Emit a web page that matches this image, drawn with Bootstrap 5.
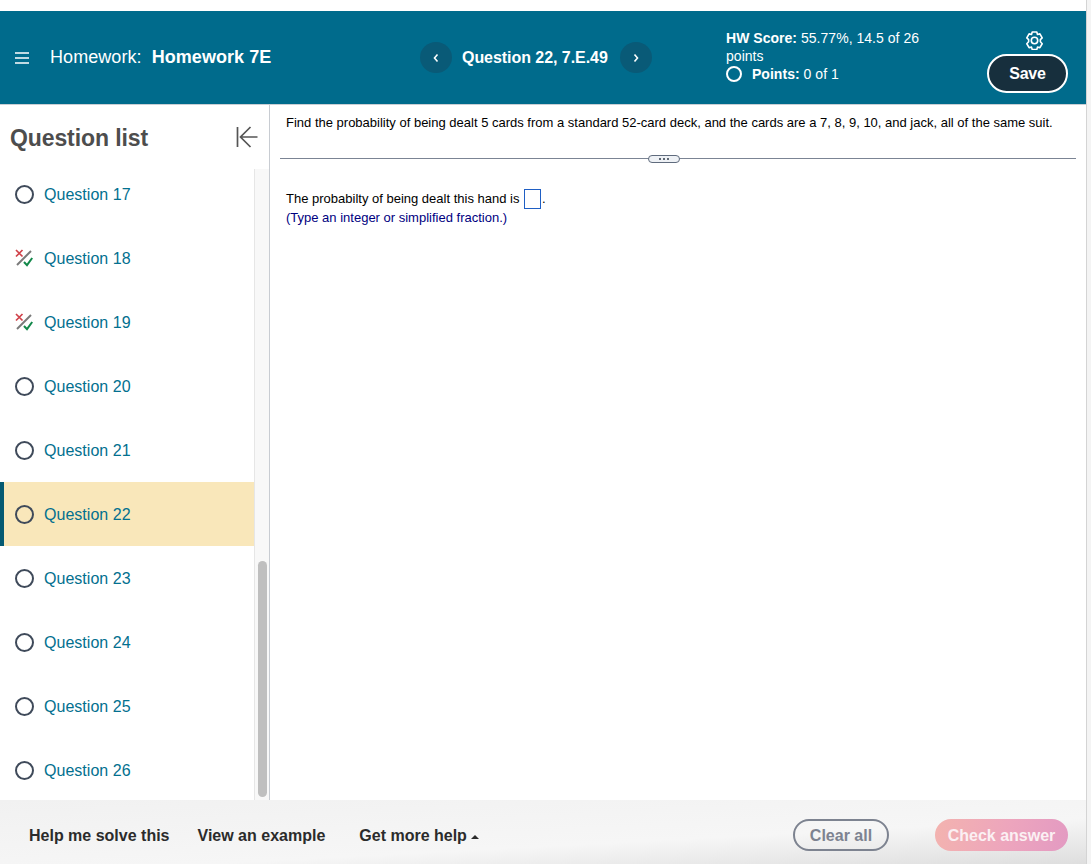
<!DOCTYPE html>
<html lang="en">
<head>
<meta charset="utf-8">
<title>Homework 7E</title>
<link href="https://cdn.jsdelivr.net/npm/bootstrap@5.3.0/dist/css/bootstrap.min.css" rel="stylesheet">
<style>
html,body{height:864px;overflow:hidden}
body{font-family:"Liberation Sans",Arial,sans-serif;background:#fff;color:#000}
.shell{width:1091px;height:864px;padding-top:11px;display:flex;flex-direction:column;position:relative}
.edge{position:absolute;top:0;bottom:0;right:0;width:5px;background:#f4f4f4;border-left:1px solid #d4d4d4}
.topbar{height:94px;width:1086px;background:#006b8c;color:#fff;border-bottom:1px solid #c9ced4;flex:none}
.menu-zone{width:420px;padding-left:15px;gap:21px;font-size:18px;letter-spacing:.06px}
.hamb{width:14px;height:12px;display:block}
.nav-zone{width:306px;font-size:16px;font-weight:700;letter-spacing:-.05px}
.round-nav{width:32px;height:31px;border-radius:50%;background:#095a77;flex:none;padding:0;border:0}
.q-title{width:168px;padding-left:10px;white-space:nowrap}
.score{width:261px;font-size:14px;line-height:18px;padding-bottom:3px;letter-spacing:.03px}
.score-ring{width:16px;height:16px;border:2px solid #fff;border-radius:50%;margin-right:10px;flex:none}
.act-zone{width:86px;padding-top:8px;gap:4px}
.cog{width:19px;height:19px;margin-left:38px;display:block}
.save-pill{width:81px;height:39px;background:#172f3d;border:2px solid #fff;border-radius:20px;color:#fff;font-weight:700;font-size:16px;padding:1px 0 0;letter-spacing:-.2px}
.work{flex:1;min-height:0;width:1086px}
.side{width:270px;flex:none;border-right:1px solid #c8ccd2;height:695px;position:relative}
.side-head{height:57px;padding:20px 9px 0 10px;color:#4d4d4d}
.side-head h2{font-size:23px;font-weight:700;margin:-1px 0 0;line-height:28px;letter-spacing:-.1px}
.collapse-ico{display:block}
.side-body{height:638px}
.q-list{width:254px;flex:none}
.q-row{height:64px;padding-left:15px;padding-top:2px;gap:10px;color:#03708f;font-size:16px;letter-spacing:.03px}
.q-row.on{background:#f9e7ba;padding-left:11px;border-left:4px solid #055a72}
.ring{width:19px;height:19px;border:2px solid #3f4a5a;border-radius:50%;flex:none;margin-top:-2px}
.mix{width:19px;height:19px;flex:none;display:block;margin-top:-2px}
.rail{width:15px;flex:none;background:#f8f8f8;border-left:1px solid #e6e6e6;position:relative;margin-top:7px}
.thumb{position:absolute;left:3px;top:392px;width:9px;height:236px;background:#bfbfbf;border-radius:5px}
.main{flex:1;min-width:0;font-size:13px;padding-left:10px;padding-right:10px}
.prompt{height:53px;padding:10px 6px 0;line-height:15px}
.split{height:1px;background:#7b8494;position:relative}
.grip{position:absolute;left:368px;top:-3px;width:32px;height:8px;background:#eef1f5;border:1px solid #5f6b7d;border-radius:4px;display:flex;align-items:center;justify-content:center;gap:2px}
.grip i{width:2px;height:2px;border-radius:50%;background:#2f3a48;display:block}
.answer{padding:30px 6px 0;line-height:18px}
.blank{display:inline-block;width:17px;height:20px;border:1px solid #1f5fc4;vertical-align:-6px;margin:0 1px}
.hint{color:#00007f}
.foot{height:64px;width:1086px;flex:none;background:linear-gradient(177deg,#f1f1f1 0%,#f6f6f6 62%,#dedede 100%);padding:6px 18px 0 29px;font-size:16px;font-weight:700;color:#2b2b2b}
.foot-links{gap:28px;padding-top:2px}
.more-link{margin-left:6px}
.caret{display:inline-block;width:0;height:0;border-left:4px solid transparent;border-right:4px solid transparent;border-bottom:4px solid #2b2b2b;margin-left:4px;vertical-align:2px}
.clear-pill{width:96px;height:32px;border:2px solid #7d8390;border-radius:16px;color:#7d8390;background:transparent;font-weight:700;font-size:16px;padding:1px 0 0;margin-right:46px}
.check-pill{width:133px;height:32px;border:0;border-radius:16px;background:linear-gradient(100deg,#f3b3af 0%,#eda5bd 55%,#e39ac2 100%);color:#fbf0f3;font-weight:700;font-size:16px;padding:1px 0 0}
</style>
</head>
<body>
<div class="shell">
  <div class="edge"></div>
  <header class="topbar d-flex align-items-center">
    <div class="menu-zone d-flex align-items-center">
      <svg class="hamb" viewBox="0 0 14 12" aria-hidden="true"><path d="M0 1h14M0 6h14M0 11h14" stroke="#fff" stroke-width="1.3" fill="none"/></svg>
      <span>Homework:&nbsp; <b>Homework 7E</b></span>
    </div>
    <div class="nav-zone d-flex align-items-center">
      <button class="round-nav d-flex align-items-center justify-content-center" aria-label="Previous"><svg width="8" height="10" viewBox="0 0 8 10"><path d="M5.5 1.5 2.5 5l3 3.5" stroke="#fff" stroke-width="1.6" fill="none"/></svg></button>
      <span class="q-title">Question 22, 7.E.49</span>
      <button class="round-nav d-flex align-items-center justify-content-center" aria-label="Next"><svg width="8" height="10" viewBox="0 0 8 10"><path d="M2.5 1.5 5.5 5l-3 3.5" stroke="#fff" stroke-width="1.6" fill="none"/></svg></button>
    </div>
    <div class="score">
      <div><b>HW Score:</b> 55.77%, 14.5 of 26<br>points</div>
      <div class="d-flex align-items-center"><span class="score-ring"></span><span><b>Points:</b> 0 of 1</span></div>
    </div>
    <div class="act-zone d-flex flex-column align-items-start">
      <svg class="cog" viewBox="0 0 19 19" aria-hidden="true"><path d="M7.6 1.2h3.8l.6 2.1 2-.5 1.9 3.3-1.5 1.5 0 1.8 1.5 1.6-1.9 3.3-2-.5-.6 2.1H7.6L7 13.8l-2 .5-1.9-3.3 1.5-1.6V7.6L3.1 6.1 5 2.8l2 .5z" transform="translate(9.5 9.5) scale(1.2) translate(-9.5 -8.3)" fill="none" stroke="#fff" stroke-width="1.35" stroke-linejoin="round"/><circle cx="9.5" cy="9.5" r="3.2" fill="none" stroke="#fff" stroke-width="1.6"/></svg>
      <button class="save-pill">Save</button>
    </div>
  </header>
  <div class="work d-flex flex-fill">
    <aside class="side">
      <div class="side-head d-flex justify-content-between align-items-start">
        <h2>Question list</h2>
        <svg class="collapse-ico" width="24" height="24" viewBox="0 0 24 24" aria-hidden="true"><path d="M1.5 2v20M21.5 12H5M14.5 2l-10 10 10 10" stroke="#555" stroke-width="1.7" fill="none"/></svg>
      </div>
      <div class="side-body d-flex">
        <div class="q-list">
          <div class="q-row d-flex align-items-center"><span class="ring"></span>Question 17</div>
          <div class="q-row d-flex align-items-center"><svg class="mix" viewBox="0 0 19 19" aria-hidden="true"><path d="M1 1l6.5 6.5M7.5 1 1 7.5" stroke="#d0424a" stroke-width="1.7"/><path d="M2 16 16 2" stroke="#7a7a7a" stroke-width="2"/><path d="M9 13l3 3.2L17.2 9" stroke="#12884a" stroke-width="2" fill="none"/></svg>Question 18</div>
          <div class="q-row d-flex align-items-center"><svg class="mix" viewBox="0 0 19 19" aria-hidden="true"><path d="M1 1l6.5 6.5M7.5 1 1 7.5" stroke="#d0424a" stroke-width="1.7"/><path d="M2 16 16 2" stroke="#7a7a7a" stroke-width="2"/><path d="M9 13l3 3.2L17.2 9" stroke="#12884a" stroke-width="2" fill="none"/></svg>Question 19</div>
          <div class="q-row d-flex align-items-center"><span class="ring"></span>Question 20</div>
          <div class="q-row d-flex align-items-center"><span class="ring"></span>Question 21</div>
          <div class="q-row on d-flex align-items-center"><span class="ring"></span>Question 22</div>
          <div class="q-row d-flex align-items-center"><span class="ring"></span>Question 23</div>
          <div class="q-row d-flex align-items-center"><span class="ring"></span>Question 24</div>
          <div class="q-row d-flex align-items-center"><span class="ring"></span>Question 25</div>
          <div class="q-row d-flex align-items-center"><span class="ring"></span>Question 26</div>
        </div>
        <div class="rail"><div class="thumb"></div></div>
      </div>
    </aside>
    <main class="main">
      <div class="prompt">Find the probability of being dealt 5 cards from a standard 52-card deck, and the cards are a 7, 8, 9, 10, and jack, all of the same suit.</div>
      <div class="split"><div class="grip"><i></i><i></i><i></i></div></div>
      <div class="answer">
        <div>The probabilty of being dealt this hand is <span class="blank"></span>.</div>
        <div class="hint">(Type an integer or simplified fraction.)</div>
      </div>
    </main>
  </div>
  <footer class="foot d-flex align-items-center justify-content-between">
    <div class="foot-links d-flex">
      <span>Help me solve this</span>
      <span>View an example</span>
      <span class="more-link">Get more help<span class="caret"></span></span>
    </div>
    <div class="d-flex">
      <button class="clear-pill">Clear all</button>
      <button class="check-pill">Check answer</button>
    </div>
  </footer>
</div>
<script src="https://cdn.jsdelivr.net/npm/bootstrap@5.3.0/dist/js/bootstrap.bundle.min.js"></script>
</body>
</html>
